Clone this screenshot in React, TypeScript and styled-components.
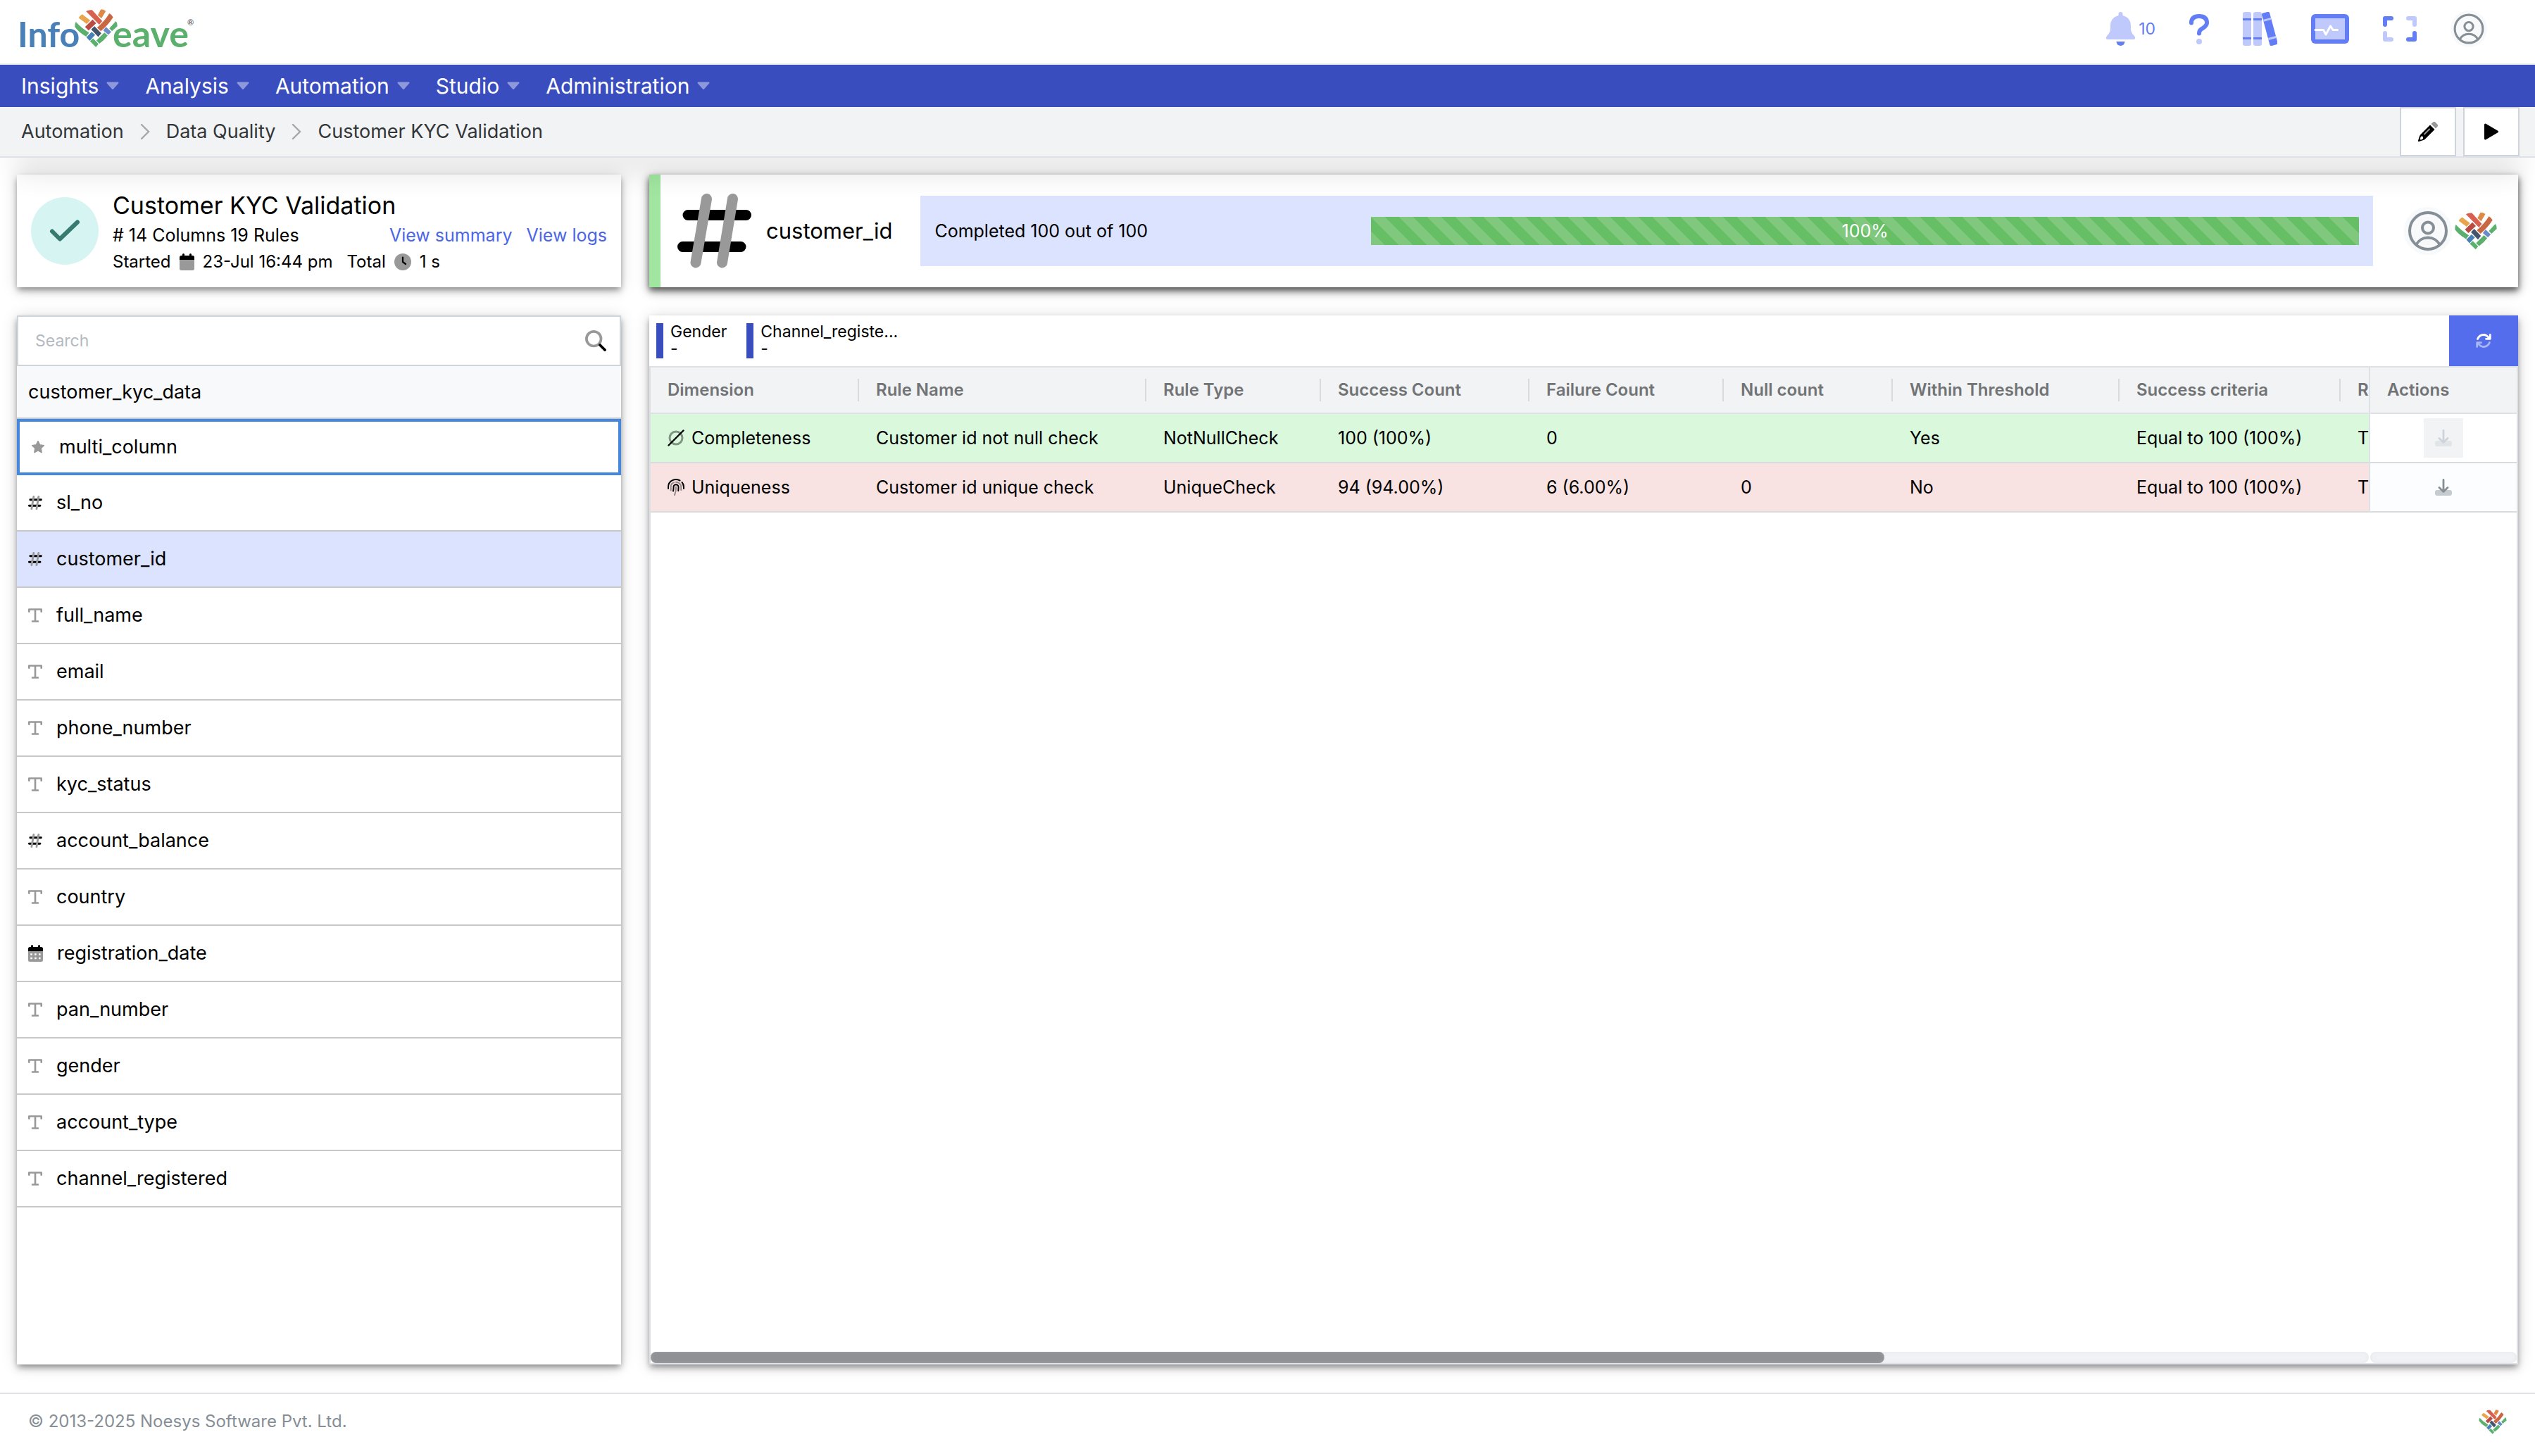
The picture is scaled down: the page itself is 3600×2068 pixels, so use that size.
import React from 'react';
import styled, { createGlobalStyle } from 'styled-components';

const GlobalStyle = createGlobalStyle`
  *, *::before, *::after { box-sizing: border-box; }
  body {
    margin: 0;
    background: #ffffff;
    color: #000000;
    font-family: Inter, "Open Sans", sans-serif;
    font-size: 25px;
    line-height: 36px;
  }
  button, input { font: inherit; color: inherit; }
  button { cursor: pointer; }
  svg { display: block; flex: none; }
`;

/* ---------- layout ---------- */

const Page = styled.div`
  display: flex;
  flex-direction: column;
  min-height: 100vh;
`;

const TopBar = styled.header`
  display: flex;
  align-items: center;
  justify-content: space-between;
  height: 92px;
  padding: 0 68px 8px 24px;
  border-bottom: 2px solid #eeeeee;
`;

const Tools = styled.div`
  display: flex;
  align-items: center;
  gap: 48px;
`;

const ToolButton = styled.button`
  display: flex;
  align-items: center;
  gap: 4px;
  padding: 0;
  border: 0;
  background: none;
  color: #637df5;
  font-size: 23px;
`;

const NavBar = styled.nav`
  display: flex;
  align-items: center;
  gap: 37px;
  height: 60px;
  padding: 0 30px;
  background: #3a4dbf;
`;

const NavItem = styled.button`
  display: flex;
  align-items: center;
  gap: 11px;
  padding: 0;
  border: 0;
  background: none;
  color: #ffffff;
  font-size: 30px;
`;

const CrumbBar = styled.div`
  position: relative;
  z-index: 1;
  display: flex;
  align-items: stretch;
  justify-content: space-between;
  height: 72px;
  padding: 0 22px 0 30px;
  background: #f1f3f5;
  border-bottom: 2px solid #dee2e8;
  box-shadow: 0 40px 40px -20px rgba(0, 0, 0, 0.12);
`;

const Crumbs = styled.ol`
  display: flex;
  align-items: center;
  gap: 23px;
  margin: 0;
  padding: 0;
  list-style: none;
`;

const Crumb = styled.li`
  display: flex;
  align-items: center;
  gap: 23px;
`;

const CrumbLink = styled.a`
  color: #333638;
  font-size: 27px;
  text-decoration: none;
`;

const CrumbActions = styled.div`
  display: flex;
  gap: 10px;
`;

const SquareButton = styled.button`
  display: flex;
  align-items: center;
  justify-content: center;
  width: 80px;
  padding: 0;
  border: 2px solid #ced4da;
  background: #ffffff;
`;

const Content = styled.main`
  flex: 1;
  display: grid;
  grid-template-columns: 858px minmax(0, 1fr);
  grid-template-rows: 160px minmax(0, 1fr);
  gap: 40px;
  padding: 24px 24px 40px;
`;

const Card = styled.section<{ $strong?: boolean }>`
  display: flex;
  align-items: center;
  background: #ffffff;
  box-shadow: ${(p) =>
    p.$strong
      ? '0 4px 8px rgba(0,0,0,.5), 0 6px 12px rgba(0,0,0,.3), 0 2px 22px rgba(0,0,0,.14)'
      : '0 4px 8px -2px rgba(0,0,0,.32), 0 6px 10px rgba(0,0,0,.18), 0 2px 22px rgba(0,0,0,.14)'};
`;

const Panel = styled(Card)`
  flex-direction: column;
  align-items: stretch;
`;

/* ---------- summary card ---------- */

const Summary = styled(Card)`
  gap: 20px;
  padding: 0 20px;
`;

const SummaryBody = styled.div`
  flex: 1;
  display: flex;
  flex-direction: column;
  padding-top: 4px;
`;

const SummaryTitle = styled.h1`
  margin: 0;
  font-size: 34px;
  font-weight: 400;
  line-height: 46px;
`;

const SummaryRow = styled.div`
  display: flex;
  align-items: center;
  gap: 20px;
  line-height: 38px;
`;

const Fact = styled.span`
  display: flex;
  align-items: center;
  gap: 12px;
  font-size: 24px;
`;

const Grow = styled.span`
  flex: 1;
`;

const TextLink = styled.a`
  color: #4c66e6;
  text-decoration: none;
`;

/* ---------- column card ---------- */

const ColumnCard = styled(Card)`
  padding: 0 30px 0 24px;
  border-left: 16px solid #a0e6a0;
`;

const ColumnName = styled.h2`
  margin: 0 40px 0 20px;
  font-size: 31px;
  font-weight: 400;
`;

const ProgressBox = styled.div`
  flex: 1;
  display: flex;
  align-items: center;
  height: 100px;
  margin-right: 44px;
  padding: 0 20px;
  background: #dce3fe;
`;

const ProgressLabel = styled.span`
  flex: 0 0 620px;
`;

const ProgressBar = styled.div`
  flex: 1;
  height: 40px;
  background-color: #66be65;
  background-image: linear-gradient(
    45deg,
    rgba(255, 255, 255, 0.16) 25%,
    transparent 25%,
    transparent 50%,
    rgba(255, 255, 255, 0.16) 50%,
    rgba(255, 255, 255, 0.16) 75%,
    transparent 75%
  );
  background-size: 40px 40px;
  color: #ffffff;
  line-height: 40px;
  text-align: center;
`;

const Owners = styled.div`
  display: flex;
  align-items: center;
  gap: 4px;
`;

/* ---------- column list ---------- */

const SearchBox = styled.label`
  display: flex;
  align-items: center;
  height: 72px;
  padding: 0 19px 0 24px;
  border: 2px solid #ced4da;
`;

const SearchInput = styled.input`
  flex: 1;
  min-width: 0;
  padding: 0;
  border: 0;
  outline: 0;
  background: none;
  font-size: 23px;
  &::placeholder { color: #b4bac1; opacity: 1; }
`;

const GroupHeading = styled.h3`
  height: 75px;
  margin: 0;
  padding: 0 16px;
  border-bottom: 2px solid #c8c8c8;
  background: #f8f9fb;
  font-size: 27px;
  font-weight: 400;
  line-height: 74px;
`;

const ColumnList = styled.ul`
  margin: 0;
  padding: 0;
  list-style: none;
`;

const ColumnRow = styled.button<{ $active?: boolean; $focused?: boolean }>`
  display: flex;
  align-items: center;
  gap: 20px;
  width: 100%;
  height: 80px;
  padding: 0 16px;
  border: 0 solid #c8c8c8;
  border-bottom-width: 2px;
  background: ${(p) => (p.$active ? '#dce3fe' : '#ffffff')};
  font-size: 27px;
  text-align: left;
  ${(p) => p.$focused && 'border: 4px solid #4487df;'}
`;

/* ---------- results ---------- */

const FilterBar = styled.div`
  display: flex;
  justify-content: space-between;
  height: 72px;
`;

const Filters = styled.div`
  display: flex;
  align-items: center;
  gap: 28px;
  padding-left: 10px;
`;

const Filter = styled.div`
  height: 50px;
  padding-left: 10px;
  border-left: 10px solid #3a4dbf;
  font-size: 23px;
  line-height: 24px;
`;

const FilterName = styled.div`
  white-space: nowrap;
`;

const RefreshButton = styled.button`
  display: flex;
  align-items: center;
  justify-content: center;
  width: 98px;
  padding: 0;
  border: 0;
  background: #536dec;
`;

const GridFrame = styled.div`
  flex: 1;
  display: flex;
  flex-direction: column;
  justify-content: space-between;
  border: 2px solid #dee2e6;
`;

const GridScroll = styled.div`
  overflow: hidden;
`;

const Table = styled.table`
  width: 3610px;
  border-collapse: separate;
  border-spacing: 0;
  table-layout: fixed;
`;

const HeadCell = styled.th`
  height: 66px;
  padding: 0;
  border-bottom: 2px solid #dee2e6;
  background: #f1f3f5;
  color: #717375;
  font-size: 24px;
  font-weight: 600;
  line-height: 32px;
  text-align: left;
`;

const HeadLabel = styled.div`
  padding-left: 24px;
  border-right: 2px solid #d8dbde;
`;

const PinnedHead = styled(HeadCell)`
  position: sticky;
  right: 0;
  padding-left: 24px;
  border-left: 2px solid #dee2e6;
`;

const Row = styled.tr<{ $passed: boolean }>`
  background: ${(p) => (p.$passed ? '#d9f8dc' : '#f9e3e2')};
`;

const Cell = styled.td`
  height: 70px;
  padding: 0 0 0 24px;
  border-bottom: 2px solid #d8dcdf;
  white-space: nowrap;
`;

const PinnedCell = styled(Cell)<{ $tint: string }>`
  position: sticky;
  right: 0;
  padding: 0;
  border-left: 2px solid #dee2e6;
  background: ${(p) => p.$tint};
`;

const DimensionTag = styled.span`
  display: flex;
  align-items: center;
  gap: 10px;
`;

const DownloadButton = styled.button`
  display: flex;
  align-items: center;
  justify-content: center;
  width: 56px;
  height: 56px;
  margin: 0 auto;
  padding: 0;
  border: 0;
  background: none;
  color: #868e96;
  &:disabled { background: #f1f3f5; color: #ced4da; }
`;

const Scrollbars = styled.div`
  display: grid;
  grid-template-columns: minmax(0, 1fr) 208px;
  gap: 2px;
  height: 16px;
`;

const Track = styled.div`
  border-radius: 8px;
  background: #f1f2f5;
  box-shadow: inset 0 0 6px #e6e8eb;
`;

const Thumb = styled.div`
  width: 71.8%;
  height: 16px;
  border-radius: 8px;
  background: #8f9194;
  box-shadow: inset 0 0 4px #a4a7aa;
`;

const Footer = styled.footer`
  display: flex;
  align-items: center;
  justify-content: space-between;
  height: 90px;
  padding: 0 40px 10px;
  border-top: 2px solid #dee2e6;
  color: #868e96;
  font-size: 24px;
`;

/* ---------- drawings ---------- */

const WeaveShapes = () => (
  <>
    <path fill="#e8a54b" d="M289 84 323 110 308 125 274 99Q280 90 289 84Z" />
    <path fill="#d8604f" d="M305 71Q316 64 331 66L374 113 361 128Z" />
    <path fill="#dc8a45" d="M368 63Q380 63 389 70L371 101 355 88Z" />
    <path fill="#c96742" d="M404 80Q414 85 420 96 400 128 368 155L352 140Q385 112 404 80Z" />
    <path fill="#b84c42" d="M333 106 348 122 316 152 301 137Z" />
    <path fill="#5ab06c" d="M262 116Q285 142 318 162L306 178Q275 160 258 137 257 125 262 116Z" />
    <path fill="#44546a" d="M341 134 370 164 357 180 327 148Z" />
    <path fill="#6d8bc9" d="M390 137 412 158 400 171 378 152Z" />
    <path fill="#5ab06c" d="M432 113Q439 122 438 134L415 155 404 143Z" />
    <path fill="#4a80b8" d="M329 158 344 171 321 196 307 181Z" />
    <path fill="#5ab06c" d="M383 161 397 174Q382 194 362 208L349 195Z" />
    <path fill="#5ab06c" d="M335 186 358 210 347 223 322 198Z" />
  </>
);

const WeaveMark = ({ width, height }: { width: number; height: number }) => (
  <svg width={width} height={height} viewBox="257 62 182 162" aria-hidden="true">
    <WeaveShapes />
  </svg>
);

const BrandLogo = () => (
  <svg width="260" height="80" viewBox="0 0 260 80" role="img" aria-label="Infoweave">
    <g fontFamily="Lato, sans-serif" fontWeight="700" fontSize="50">
      <text x="1" y="66" fill="#4a80b8">Info</text>
      <text x="136" y="66" fill="#5ab06c" fontSize="52">eave</text>
    </g>
    <text x="242" y="35" fill="#333333" fontFamily="Lato, sans-serif" fontSize="11">®</text>
    <g transform="translate(82 12) scale(.3352) translate(-257 -62)">
      <WeaveShapes />
    </g>
  </svg>
);

const Avatar = ({ size }: { size: number }) => (
  <svg width={size} height={size} viewBox="0 0 68 68" fill="none" stroke="#868e96" strokeWidth="4">
    <circle cx="34" cy="34" r="34" fill="#f8f9fb" stroke="none" />
    <circle cx="34" cy="34" r="26" />
    <circle cx="34" cy="29.5" r="8" />
    <path d="M17 54A19 19 0 0 1 51 54" />
  </svg>
);

const HashIcon = ({ size }: { size: number }) => (
  <svg width={size} height={size} viewBox="0 0 106 106" fill="none" strokeLinecap="round" strokeWidth="15">
    <path stroke="#000" d="M15 30.5H97.5M7.5 75.5H90" />
    <path stroke="#999" d="M41.5 7.5 26 98M78.5 7.5 63.5 98" />
  </svg>
);

const TextIcon = () => (
  <svg width="20" height="20" viewBox="0 0 20 20" fill="none" stroke="#999" strokeWidth="2.6" strokeLinecap="round" strokeLinejoin="round">
    <path d="M1.3 4.8V1.5H18.7V4.8M10 1.5V18.5M6 18.5H14" />
  </svg>
);

const StarIcon = () => (
  <svg width="20" height="20" viewBox="0 0 20 20">
    <path fill="#999" stroke="#999" strokeWidth="1.6" strokeLinejoin="round" d="M10 1.6 12.5 6.9 18.3 7.7 14.1 11.7 15.1 17.6 10 14.8 4.9 17.6 5.9 11.7 1.7 7.7 7.5 6.9Z" />
  </svg>
);

const CalendarIcon = ({ dots }: { dots?: boolean }) => (
  <svg width="21" height="24" viewBox="0 0 21 24">
    <path fill="#999" d="M0 9H21V21.5A2.5 2.5 0 0 1 18.5 24H2.5A2.5 2.5 0 0 1 0 21.5Z" />
    <path fill="#000" d="M0 9V5.5A2.5 2.5 0 0 1 2.5 3H4V1.5A1.5 1.5 0 0 1 7 1.5V3H14V1.5A1.5 1.5 0 0 1 17 1.5V3H18.5A2.5 2.5 0 0 1 21 5.5V9Z" />
    {dots && (
      <path stroke="#fff" strokeWidth="2.6" strokeDasharray="2.6 3.3" d="M3.2 13.5H18M3.2 19H18" />
    )}
  </svg>
);

const ClockIcon = () => (
  <svg width="24" height="24" viewBox="0 0 24 24" fill="none">
    <circle cx="12" cy="12" r="12" fill="#999" />
    <path stroke="#000" strokeWidth="2.2" strokeLinecap="round" strokeLinejoin="round" d="M12 5.5V12L16 15" />
  </svg>
);

const CheckBadge = () => (
  <svg width="96" height="96" viewBox="0 0 96 96" fill="none">
    <circle cx="48" cy="48" r="48" fill="#d6f4f2" />
    <path stroke="#367a70" strokeWidth="6" strokeLinecap="round" strokeLinejoin="round" d="M30 48.5 41 59.5 66 35.5" />
  </svg>
);

const SearchIcon = () => (
  <svg width="30" height="30" viewBox="0 0 30 30" fill="none">
    <circle cx="12.2" cy="12.2" r="10.3" stroke="#999" strokeWidth="3.7" />
    <path stroke="#000" strokeWidth="3.8" strokeLinecap="round" d="M21 21 28 28" />
  </svg>
);

const NullSetIcon = () => (
  <svg width="24" height="24" viewBox="0 0 24 24" fill="none">
    <circle cx="12" cy="12" r="9" stroke="#000" strokeOpacity=".4" strokeWidth="3" />
    <path stroke="#000" strokeWidth="2.4" strokeLinecap="round" d="M1.5 22.5 22.5 1.5" />
  </svg>
);

const FingerprintIcon = () => (
  <svg width="24" height="24" viewBox="0 0 24 24" fill="none" strokeWidth="2" strokeLinecap="round">
    <path stroke="#000" d="M1 14V11.5A11 10.5 0 0 1 17.5 2.5M20.5 5A11 10.5 0 0 1 23 11.5V14M8 17.5Q8.6 14.5 8.5 11.5A3.5 3.3 0 0 1 15.5 11.5Q15.6 14 15.2 17" />
    <path stroke="#000" strokeOpacity=".4" d="M4.7 16.5V11.5A7.3 7 0 0 1 9 5.2M12 4.7A7.2 7 0 0 1 19.3 11.5V16M12 11.5Q12.2 18 10 23" />
  </svg>
);

const RefreshIcon = () => (
  <svg width="22" height="20" viewBox="0 0 22 20" fill="none" stroke="#fff" strokeWidth="2.8" strokeLinecap="round" strokeLinejoin="round">
    <path d="M2.5 7.5Q5 1.5 11 1.5 15.5 1.5 19 6.5M20.3 1.5V7.3H14.5" />
    <path opacity=".5" d="M19.5 12.5Q17 18.5 11 18.5 6.5 18.5 3 13.5M1.7 18.5V12.7H7.5" />
  </svg>
);

const DownloadIcon = () => (
  <svg width="24" height="24" viewBox="0 0 24 24" fill="none">
    <path fill="currentColor" fillOpacity=".45" d="M3 16H7.5L12 20 16.5 16H21A3 3 0 0 1 24 19V21A3 3 0 0 1 21 24H3A3 3 0 0 1 0 21V19A3 3 0 0 1 3 16Z" />
    <path stroke="currentColor" strokeWidth="2.8" strokeLinecap="round" strokeLinejoin="round" d="M12 1.5V18M6 12.5 12 18.5 18 12.5" />
  </svg>
);

const PencilIcon = () => (
  <svg width="28" height="28" viewBox="0 0 28 28">
    <path fill="#999" d="M18.5 3 21 .8A2.5 2.5 0 0 1 24.6 .8L27.2 3.4A2.5 2.5 0 0 1 27.2 7L25 9.5Z" />
    <path fill="#000" d="M17 4.5 23.5 11 10 24.5Q9 25.5 7.5 26L1.2 28Q-.3 28 0 26.8L2 20.5Q2.5 19 3.5 18Z" />
    <path stroke="#999" strokeWidth="1.8" strokeLinecap="round" d="M9 17.5 16 10.5" />
    <path fill="#fff" d="M4.5 20.5 7 21V23.5L5.5 25.2 2.8 25.5 3.3 22.5Z" />
  </svg>
);

const PlayIcon = () => (
  <svg width="22" height="24" viewBox="0 0 22 24">
    <path stroke="#000" strokeWidth="3" strokeLinejoin="round" d="M2.5 2 19.5 12 2.5 22Z" />
  </svg>
);

const CrumbChevron = () => (
  <svg width="14" height="24" viewBox="0 0 14 24" fill="none" stroke="#a5a8ab" strokeWidth="2.4" strokeLinecap="round">
    <path d="M2 2 12 12 2 22" />
  </svg>
);

const CaretIcon = () => (
  <svg width="18" height="12" viewBox="0 0 18 12">
    <path fill="#8e99dc" stroke="#8e99dc" strokeWidth="2" strokeLinejoin="round" d="M1.5 1.5H16.5L9 10Z" />
  </svg>
);

const LIGHT = '#bfc9fb';
const STRONG = '#637df5';

const BellIcon = () => (
  <svg width="43" height="48" viewBox="0 0 43 48">
    <path fill={LIGHT} d="M18.5 3A3 3 0 0 1 24.5 3V5Q36 8 36 20V24Q36 29 41 34 44 39 40 39H3Q-1 39 2 34 7 29 7 24V20Q7 8 18.5 5Z" />
    <path fill={STRONG} d="M15.5 42H27.5A6 6 0 0 1 15.5 42Z" />
  </svg>
);

const QuestionIcon = () => (
  <svg width="28" height="43" viewBox="0 0 28 43" fill="none">
    <path stroke={STRONG} strokeWidth="6" strokeLinecap="round" d="M3 12.5Q3 3 14 3T25 12.5Q25 16 20 19.5L17 21.5Q14 23.5 14 27.5" />
    <circle cx="14" cy="39" r="4" fill={LIGHT} />
  </svg>
);

const BooksIcon = () => (
  <svg width="49" height="48" viewBox="0 0 49 48">
    <rect width="12" height="48" rx="3" fill={LIGHT} />
    <rect x="15" width="12" height="48" rx="3" fill={LIGHT} />
    <path fill={STRONG} d="M0 9H12V12H0ZM15 9H27V12H15ZM0 36H12V39H0ZM15 36H27V39H15Z" />
    <g transform="rotate(-15 38 24)">
      <rect x="32.5" y="0" width="11.5" height="48" rx="2.5" fill={STRONG} />
      <path fill={LIGHT} d="M32.5 9H44V12H32.5ZM32.5 36H44V39H32.5Z" />
    </g>
  </svg>
);

const MonitorIcon = () => (
  <svg width="54" height="42" viewBox="0 0 54 42" fill="none">
    <rect width="54" height="42" rx="6" fill={STRONG} />
    <rect x="6" y="6" width="42" height="30" fill={LIGHT} />
    <path stroke="#fff" strokeWidth="3" strokeLinecap="round" strokeLinejoin="round" d="M6 22.5H17.5L21 29 27.5 17 31 22.5H37.5" />
  </svg>
);

const ExpandIcon = () => (
  <svg width="48" height="36" viewBox="0 0 48 36" fill="none" strokeWidth="6" strokeLinecap="round" strokeLinejoin="round">
    <path stroke={STRONG} d="M3 12V3H12M45 24V33H36" />
    <path stroke={LIGHT} d="M36 3H45V12M12 33H3V24" />
  </svg>
);

/* ---------- data ---------- */

type Kind = 'multi' | 'number' | 'text' | 'date';

const columns: { name: string; kind: Kind }[] = [
  { name: 'multi_column', kind: 'multi' },
  { name: 'sl_no', kind: 'number' },
  { name: 'customer_id', kind: 'number' },
  { name: 'full_name', kind: 'text' },
  { name: 'email', kind: 'text' },
  { name: 'phone_number', kind: 'text' },
  { name: 'kyc_status', kind: 'text' },
  { name: 'account_balance', kind: 'number' },
  { name: 'country', kind: 'text' },
  { name: 'registration_date', kind: 'date' },
  { name: 'pan_number', kind: 'text' },
  { name: 'gender', kind: 'text' },
  { name: 'account_type', kind: 'text' },
  { name: 'channel_registered', kind: 'text' },
];

const kindIcons: Record<Kind, React.ReactNode> = {
  multi: <StarIcon />,
  number: <HashIcon size={20} />,
  text: <TextIcon />,
  date: <CalendarIcon dots />,
};

const gridColumns = [
  { title: 'Dimension', width: 296 },
  { title: 'Rule Name', width: 408 },
  { title: 'Rule Type', width: 248 },
  { title: 'Success Count', width: 296 },
  { title: 'Failure Count', width: 276 },
  { title: 'Null count', width: 240 },
  { title: 'Within Threshold', width: 322 },
  { title: 'Success criteria', width: 314 },
  { title: 'R', width: 1000 },
];

const rules = [
  {
    dimension: 'Completeness',
    icon: <NullSetIcon />,
    passed: true,
    tint: '#ffffff',
    cells: ['Customer id not null check', 'NotNullCheck', '100 (100%)', '0', '', 'Yes', 'Equal to 100 (100%)', 'Th'],
  },
  {
    dimension: 'Uniqueness',
    icon: <FingerprintIcon />,
    passed: false,
    tint: '#fcfdfe',
    cells: ['Customer id unique check', 'UniqueCheck', '94 (94.00%)', '6 (6.00%)', '0', 'No', 'Equal to 100 (100%)', 'Th'],
  },
];

const trail = ['Automation', 'Data Quality', 'Customer KYC Validation'];

export default function App() {
  return (
    <Page>
      <GlobalStyle />
      <TopBar>
        <BrandLogo />
        <Tools>
          <ToolButton aria-label="Notifications"><BellIcon />10</ToolButton>
          <ToolButton aria-label="Help"><QuestionIcon /></ToolButton>
          <ToolButton aria-label="Library"><BooksIcon /></ToolButton>
          <ToolButton aria-label="Monitor"><MonitorIcon /></ToolButton>
          <ToolButton aria-label="Full screen"><ExpandIcon /></ToolButton>
          <ToolButton aria-label="Account"><Avatar size={52} /></ToolButton>
        </Tools>
      </TopBar>

      <NavBar>
        {['Insights', 'Analysis', 'Automation', 'Studio', 'Administration'].map((item) => (
          <NavItem key={item}>{item}<CaretIcon /></NavItem>
        ))}
      </NavBar>

      <CrumbBar>
        <Crumbs>
          {trail.map((item, i) => (
            <Crumb key={item}>
              {i > 0 && <CrumbChevron />}
              <CrumbLink href="#">{item}</CrumbLink>
            </Crumb>
          ))}
        </Crumbs>
        <CrumbActions>
          <SquareButton aria-label="Edit"><PencilIcon /></SquareButton>
          <SquareButton aria-label="Run"><PlayIcon /></SquareButton>
        </CrumbActions>
      </CrumbBar>

      <Content>
        <Summary>
          <CheckBadge />
          <SummaryBody>
            <SummaryTitle>Customer KYC Validation</SummaryTitle>
            <SummaryRow>
              <span># 14 Columns 19 Rules</span>
              <Grow />
              <TextLink href="#">View summary</TextLink>
              <TextLink href="#">View logs</TextLink>
            </SummaryRow>
            <SummaryRow>
              <Fact>Started <CalendarIcon /> 23-Jul 16:44 pm</Fact>
              <Fact>Total <ClockIcon /> 1 s</Fact>
            </SummaryRow>
          </SummaryBody>
        </Summary>

        <ColumnCard $strong>
          <HashIcon size={106} />
          <ColumnName>customer_id</ColumnName>
          <ProgressBox>
            <ProgressLabel>Completed 100 out of 100</ProgressLabel>
            <ProgressBar role="progressbar" aria-valuenow={100}>100%</ProgressBar>
          </ProgressBox>
          <Owners>
            <Avatar size={68} />
            <WeaveMark width={60} height={54} />
          </Owners>
        </ColumnCard>

        <Panel>
          <SearchBox>
            <SearchInput type="text" placeholder="Search" aria-label="Search columns" />
            <SearchIcon />
          </SearchBox>
          <GroupHeading>customer_kyc_data</GroupHeading>
          <ColumnList>
            {columns.map((column) => (
              <li key={column.name}>
                <ColumnRow $active={column.name === 'customer_id'} $focused={column.kind === 'multi'}>
                  {kindIcons[column.kind]}
                  {column.name}
                </ColumnRow>
              </li>
            ))}
          </ColumnList>
        </Panel>

        <Panel>
          <FilterBar>
            <Filters>
              <Filter><FilterName>Gender</FilterName>-</Filter>
              <Filter><FilterName>Channel_registe...</FilterName>-</Filter>
            </Filters>
            <RefreshButton aria-label="Refresh"><RefreshIcon /></RefreshButton>
          </FilterBar>
          <GridFrame>
            <GridScroll>
              <Table>
                <colgroup>
                  {gridColumns.map((c) => <col key={c.title} width={c.width} />)}
                  <col width={210} />
                </colgroup>
                <thead>
                  <tr>
                    {gridColumns.map((c) => (
                      <HeadCell key={c.title}><HeadLabel>{c.title}</HeadLabel></HeadCell>
                    ))}
                    <PinnedHead>Actions</PinnedHead>
                  </tr>
                </thead>
                <tbody>
                  {rules.map((rule) => (
                    <Row key={rule.dimension} $passed={rule.passed}>
                      <Cell><DimensionTag>{rule.icon}{rule.dimension}</DimensionTag></Cell>
                      {rule.cells.map((value, i) => <Cell key={i}>{value}</Cell>)}
                      <PinnedCell $tint={rule.tint}>
                        <DownloadButton disabled={rule.passed} aria-label="Download"><DownloadIcon /></DownloadButton>
                      </PinnedCell>
                    </Row>
                  ))}
                </tbody>
              </Table>
            </GridScroll>
            <Scrollbars>
              <Track><Thumb /></Track>
              <Track />
            </Scrollbars>
          </GridFrame>
        </Panel>
      </Content>

      <Footer>
        <span>© 2013-2025 Noesys Software Pvt. Ltd.</span>
        <WeaveMark width={40} height={35} />
      </Footer>
    </Page>
  );
}
